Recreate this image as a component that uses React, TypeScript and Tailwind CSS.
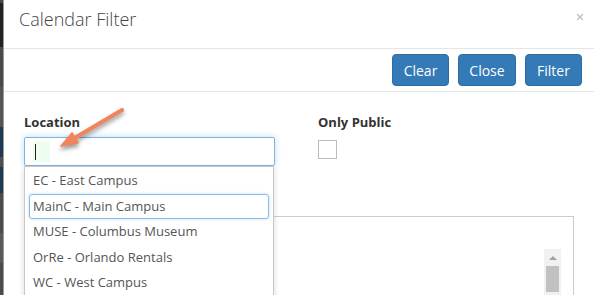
import { X } from "lucide-react";

const LOCATIONS = [
  "EC - East Campus",
  "MainC - Main Campus",
  "MUSE - Columbus Museum",
  "OrRe - Orlando Rentals",
  "WC - West Campus",
];

// slice of the page behind the modal overlay
const BACKDROP = [
  { h: "h-[3px]", c: "bg-[#4a4a4a]" },
  { h: "h-[44px]", c: "bg-[#222222]" },
  { h: "h-[40px]", c: "bg-[#4a4a4a]" },
  { h: "h-[40px]", c: "bg-[#555555]" },
  { h: "h-[30px]", c: "bg-[#1d3a55]" },
  { h: "h-[10px]", c: "bg-[#4e4e4e]" },
  { h: "h-[26px]", c: "bg-[#1d3a55]" },
  { h: "h-[40px]", c: "bg-[#4b4b4b]" },
  { h: "h-[30px]", c: "bg-[#5a5a5a]" },
  { h: "h-[32px]", c: "bg-[#4b4b4b]" },
];

function Arrow() {
  return (
    <svg
      className="pointer-events-none absolute top-0 left-0 drop-shadow-[0px_3px_2px_rgba(0,0,0,0.4)]"
      width="594"
      height="295"
    >
      <line x1="122" y1="110" x2="73" y2="139" stroke="#f2845d" strokeWidth="4" strokeLinecap="round" />
      <polygon points="61,146 78,143 72,133" fill="#f2845d" stroke="#f2845d" strokeWidth="1.5" strokeLinejoin="round" />
    </svg>
  );
}

export default function App() {
  return (
    <div className="relative flex h-[295px] w-[594px] overflow-hidden bg-white font-['Open_Sans',sans-serif]">
      <div className="flex w-[3px] shrink-0 flex-col">
        {BACKDROP.map((b, i) => (
          <div key={i} className={`shrink-0 ${b.h} ${b.c}`} />
        ))}
      </div>
      <div className="w-px shrink-0 bg-[#9a9a9a]" />

      <div className="flex min-w-0 flex-1 flex-col">
        <div className="flex h-[49px] shrink-0 items-start justify-between border-b border-[#e5e5e5] pt-[7px] pr-[9px] pl-[15px]">
          <h4 className="text-[18px] leading-[25px] font-light text-[#444]">Calendar Filter</h4>
          <X className="mt-[5px] size-[10px] text-[#bdbdbd]" strokeWidth={3} />
        </div>

        <div className="flex h-[43px] shrink-0 justify-end gap-[9px] border-b border-[#e5e5e5] pt-[5px] pr-[12px]">
          <button className="h-[32px] w-[57px] rounded-[4px] border border-[#2e6da4] bg-[#337ab7] text-[14px] text-white">
            Clear
          </button>
          <button className="h-[32px] w-[58px] rounded-[4px] border border-[#2e6da4] bg-[#337ab7] text-[14px] text-white">
            Close
          </button>
          <button className="h-[32px] w-[57px] rounded-[4px] border border-[#2e6da4] bg-[#337ab7] text-[14px] text-white">
            Filter
          </button>
        </div>

        <div className="shrink-0 px-[20px] pt-[21px]">
          <div className="flex gap-[43px]">
            <div className="relative w-[251px]">
              <label className="block text-[13px] leading-[18px] font-bold text-[#333]">Location</label>
              <div className="mt-[6px] flex h-[29px] items-center rounded-[2px] border border-[#7fb3e0] pl-[8px] shadow-[0_0_6px_rgba(102,175,233,0.45)]">
                <div className="flex h-[21px] w-[17px] items-center bg-[#effdf0] pl-[2px]">
                  <div className="h-[16px] w-px bg-[#222]" />
                </div>
              </div>
              <div className="absolute top-full left-0 z-10 w-[250px] border border-[#c8c8c8] bg-white pt-px shadow-[0_3px_6px_rgba(0,0,0,0.15)]">
                {LOCATIONS.map((loc) => (
                  <div
                    key={loc}
                    className={`mx-[4px] flex h-[25.5px] items-center rounded-[3px] border px-[3px] text-[13px] text-[#555] ${
                      loc.startsWith("MainC")
                        ? "border-[#8dbbe3] shadow-[0_0_3px_rgba(102,175,233,0.5)]"
                        : "border-transparent"
                    }`}
                  >
                    {loc}
                  </div>
                ))}
                <div className="h-[20px]" />
              </div>
            </div>
            <div>
              <label className="block text-[13px] leading-[18px] font-bold text-[#333]">Only Public</label>
              <div className="mt-[9px] h-[19px] w-[19px] border border-[#bbb] bg-white" />
            </div>
          </div>

          <div className="mt-[50px] flex h-[120px] justify-end border border-[#cccccc] pt-[32px] pr-[12px]">
            <div className="flex w-[17px] flex-col items-center bg-[#f1f1f1] pt-[7px]">
              <div className="h-0 w-0 border-x-[4px] border-b-[4px] border-x-transparent border-b-[#a3a3a3]" />
              <div className="mt-[6px] h-[26px] w-[13px] bg-[#c1c1c1]" />
            </div>
          </div>
        </div>
      </div>

      <Arrow />
    </div>
  );
}
